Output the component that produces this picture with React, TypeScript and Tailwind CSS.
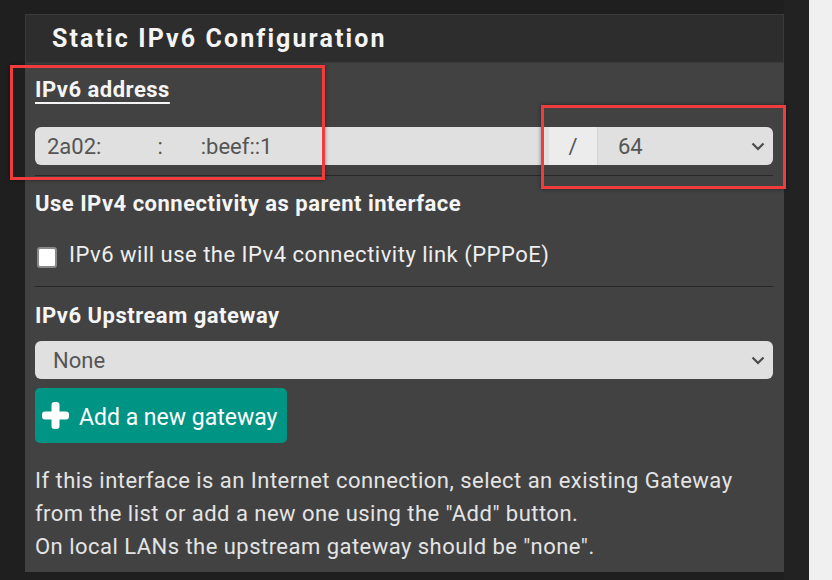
import React from "react";

function Chevron() {
  return (
    <svg width="14" height="9" viewBox="0 0 14 9" className="shrink-0">
      <path d="M1.5 1.5 L7 7 L12.5 1.5" fill="none" stroke="#4a4a4a" strokeWidth="2.2" />
    </svg>
  );
}

function Plus() {
  return (
    <svg width="27" height="27" viewBox="0 0 27 27" className="shrink-0">
      <rect x="9.5" y="0" width="8" height="27" rx="3" fill="#fff" />
      <rect x="0" y="9.5" width="27" height="8" rx="3" fill="#fff" />
    </svg>
  );
}

export default function App() {
  return (
    <div className="relative flex w-[832px] h-[580px] overflow-hidden bg-[#1f1f1f] font-['Roboto',sans-serif]">
      <div className="w-[784px] pl-[25px] pt-[14px]">
        <div className="w-[759px] bg-[#424242]">
          {/* panel heading */}
          <div className="h-[49px] flex items-center pl-[26px] bg-[#2d2d2d] border border-[#3a3a3a]">
            <h2 className="text-[25px] font-bold tracking-[2.1px] text-[#f4f4f4]">Static IPv6 Configuration</h2>
          </div>

          <div className="pl-[10px] pr-[11px]">
            {/* address */}
            <div className="pt-[13px] pb-[10px] border-b border-[#272727]">
              <div className="h-[28px] leading-[28px] text-[22px] tracking-[0.5px] font-bold text-[#f5f5f5]">
                <span className="underline decoration-2 underline-offset-[5px]">IPv6 address</span>
              </div>
              <div className="mt-[23px] flex h-[38px] rounded-[6px] overflow-hidden text-[22px] text-[#555]">
                <div className="flex-1 flex items-center pl-[12px] bg-[#e0e0e0] whitespace-pre">
                  <span>2a02:</span>
                  <span className="w-[56px]" />
                  <span>:</span>
                  <span className="w-[38px]" />
                  <span>:beef::1</span>
                </div>
                <div className="w-[49px] flex items-center justify-center bg-[#ececec] border-r border-[#d4d4d4]">/</div>
                <div className="w-[175px] flex items-center justify-between pl-[20px] pr-[8px] bg-[#e0e0e0]">
                  <span>64</span>
                  <Chevron />
                </div>
              </div>
            </div>

            {/* parent interface */}
            <div className="pt-[14px] pb-[17px] border-b border-[#272727]">
              <div className="h-[28px] leading-[28px] text-[22px] tracking-[0.5px] font-bold text-[#f5f5f5]">
                Use IPv4 connectivity as parent interface
              </div>
              <label className="mt-[23px] flex items-start h-[28px] leading-[28px] text-[22px] tracking-[0.5px] text-[#eeeeee]">
                <span className="mt-[6px] ml-[2px] w-[20px] h-[21px] rounded-[3px] bg-white border-2 border-[#8a8a8a]" />
                <span className="ml-[12px]">IPv6 will use the IPv4 connectivity link (PPPoE)</span>
              </label>
            </div>

            {/* gateway */}
            <div className="pt-[15px] pb-[9px]">
              <div className="h-[28px] leading-[28px] text-[22px] tracking-[0.5px] font-bold text-[#f5f5f5]">
                IPv6 Upstream gateway
              </div>
              <div className="mt-[11px] h-[38px] flex items-center justify-between pl-[18px] pr-[8px] rounded-[6px] bg-[#e0e0e0] text-[22px] text-[#555]">
                <span>None</span>
                <Chevron />
              </div>
              <button className="mt-[9px] h-[55px] w-[252px] flex items-center gap-[10px] pl-[7px] rounded-[5px] bg-[#009485] text-[23px] text-white">
                <Plus />
                <span className="mt-[6px]">Add a new gateway</span>
              </button>
              <p className="mt-[21px] text-[22px] tracking-[0.47px] leading-[33px] text-[#e4e4e4]">
                If this interface is an Internet connection, select an existing Gateway
                <br />
                from the list or add a new one using the "Add" button.
                <br />
                On local LANs the upstream gateway should be "none".
              </p>
            </div>
          </div>
        </div>
      </div>
      <div className="w-[25px] bg-[#222222]" />
      <div className="flex-1 bg-[#f0f0f0]" />

      {/* annotation boxes */}
      <div className="absolute left-[10px] top-[65px] w-[315px] h-[115px] border-[3px] border-[#f03c3c] shadow-[0_0_4px_rgba(0,0,0,0.45)]" />
      <div className="absolute left-[541px] top-[105px] w-[245px] h-[84px] border-[3px] border-[#f03c3c] shadow-[0_0_4px_rgba(0,0,0,0.45)]" />
    </div>
  );
}
